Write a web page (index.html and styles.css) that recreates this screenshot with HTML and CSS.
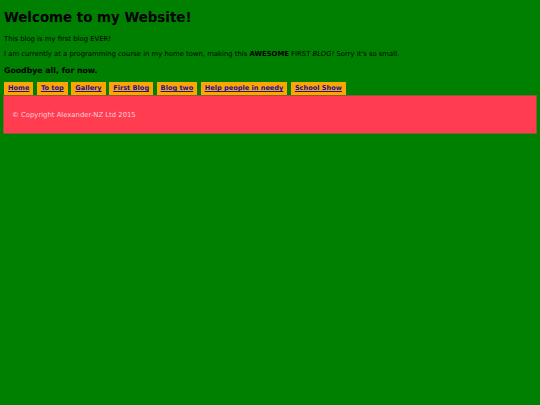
FILE: index.html
```html
<!DOCTYPE html>
<html>
<head>
<meta charset="utf-8">
<title>My Website</title>
<link rel="stylesheet" href="styles.css">
</head>
<body>
<div class="page">
  <h1 class="title">Welcome to my Website!</h1>
  <p class="text">This blog is my first blog EVER!</p>
  <p class="text">I am currently at a programming course in my home town, making this <b>AWESOME</b> FIRST <i>BLOG!</i> Sorry it's so small.</p>
  <h3 class="bye">Goodbye all, for now.</h3>
  <ul class="nav">
    <li class="tab"><a href="#">Home</a></li>
    <li class="tab"><a href="#">To top</a></li>
    <li class="tab"><a href="#">Gallery</a></li>
    <li class="tab"><a href="#">First Blog</a></li>
    <li class="tab"><a href="#">Blog two</a></li>
    <li class="tab"><a href="#">Help people in needy</a></li>
    <li class="tab"><a href="#">School Show</a></li>
  </ul>
  <div class="footer">© Copyright Alexander-NZ Ltd 2015</div>
</div>
</body>
</html>
```
FILE: styles.css
```css
html, body {
  margin: 0;
  padding: 0;
}
body {
  background: #008000;
  font-family: "DejaVu Sans", Verdana, sans-serif;
  color: #000;
}
.page {
  padding: 10px 3px 0 3px;
}
.title {
  margin: 0 0 0 1px;
  font-size: 13.4px;
  line-height: 15px;
  font-weight: bold;
}
.text {
  margin: 0 0 0 1px;
  font-size: 6.85px;
  line-height: 15px;
}
.text:first-of-type {
  margin-top: 7px;
}
.bye {
  margin: 3px 0 0 1px;
  font-size: 7.8px;
  line-height: 12px;
}
.nav {
  list-style: none;
  margin: 0;
  padding: 0 0 0 1px;
  display: flex;
  gap: 3.5px;
  margin-top: 5px;
}
.tab {
  background: #ffa500;
  padding: 2px 4px 2px 4px;
  font-size: 6.6px;
  line-height: 9px;
  font-weight: bold;
}
.tab a {
  color: #1c1096;
}
.footer {
  background: #ff3c50;
  border: 1px solid #8a5a3a;
  color: #ffd0d8;
  font-size: 6.85px;
  padding: 14px 8px 13px 8px;
  line-height: 10px;
}
```
